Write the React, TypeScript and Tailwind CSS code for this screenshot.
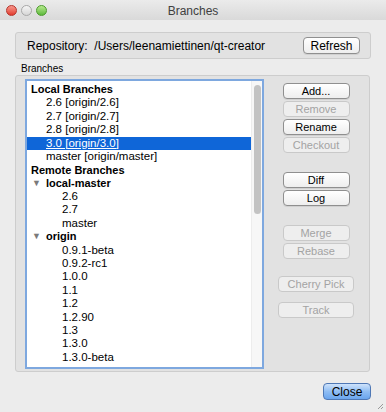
import React from "react";

type Row = { label: string; indent: number; bold?: boolean; arrow?: boolean; selected?: boolean };

const rows: Row[] = [
  { label: "Local Branches", indent: 0, bold: true },
  { label: "2.6 [origin/2.6]", indent: 1 },
  { label: "2.7 [origin/2.7]", indent: 1 },
  { label: "2.8 [origin/2.8]", indent: 1 },
  { label: "3.0 [origin/3.0]", indent: 1, selected: true },
  { label: "master [origin/master]", indent: 1 },
  { label: "Remote Branches", indent: 0, bold: true },
  { label: "local-master", indent: 1, bold: true, arrow: true },
  { label: "2.6", indent: 2 },
  { label: "2.7", indent: 2 },
  { label: "master", indent: 2 },
  { label: "origin", indent: 1, bold: true, arrow: true },
  { label: "0.9.1-beta", indent: 2 },
  { label: "0.9.2-rc1", indent: 2 },
  { label: "1.0.0", indent: 2 },
  { label: "1.1", indent: 2 },
  { label: "1.2", indent: 2 },
  { label: "1.2.90", indent: 2 },
  { label: "1.3", indent: 2 },
  { label: "1.3.0", indent: 2 },
  { label: "1.3.0-beta", indent: 2 },
];

const indentClass = ["pl-[4px]", "pl-[19px]", "pl-[35px]"];

function MacButton({ label, disabled, className }: { label: string; disabled?: boolean; className?: string }) {
  return (
    <div
      className={
        "flex items-center justify-center rounded-[4px] border text-[11px] leading-none " +
        (disabled
          ? "border-[#c9c9c9] bg-[#eeeeee] text-[#a3a3a3] "
          : "border-[#8f8f8f] bg-gradient-to-b from-[#ffffff] to-[#eeeeee] text-black shadow-[0_1px_0_rgba(0,0,0,0.08)] ") +
        (className ?? "")
      }
    >
      {label}
    </div>
  );
}

function TrafficLight({ color, ring }: { color: string; ring: string }) {
  return <div className={"h-[11px] w-[11px] rounded-full border " + color + " " + ring} />;
}

export default function App() {
  return (
    <div
      className="relative flex h-[412px] w-[386px] flex-col overflow-hidden bg-[#ececec] text-black"
      style={{ fontFamily: '"Liberation Sans", Arial, sans-serif' }}
    >
      {/* title bar */}
      <div className="relative flex h-[20px] items-center bg-gradient-to-b from-[#ebebeb] to-[#d9d9d9] px-[6px]">
        <div className="flex gap-[4px]">
          <TrafficLight color="bg-gradient-to-b from-[#f7958c] to-[#e1372c]" ring="border-[#b5352c]" />
          <TrafficLight color="bg-gradient-to-b from-[#f5f5f5] to-[#d6d6d6]" ring="border-[#a8a8a8]" />
          <TrafficLight color="bg-gradient-to-b from-[#b6ea8d] to-[#5cb93a]" ring="border-[#4c9a2e]" />
        </div>
        <div className="absolute inset-x-0 top-[2px] text-center text-[12px] text-[#404040]">Branches</div>
      </div>

      <div className="flex flex-1 flex-col px-[15px]">
        {/* repository box */}
        <div className="mt-[12px] flex h-[27px] items-center justify-between rounded-[3px] border border-[#cdcdcd] bg-[#e2e2e2] pl-[11px] pr-[10px]">
          <span className="text-[12px]">Repository:&nbsp; /Users/leenamiettinen/qt-creator</span>
          <MacButton label="Refresh" className="h-[17px] w-[57px] text-[12px]" />
        </div>

        <div className="ml-[6px] mt-[4px] text-[10px] leading-[11px]">Branches</div>

        {/* branches group */}
        <div className="mt-[1px] flex h-[297px] w-[355px] rounded-[3px] border border-[#cdcdcd] bg-[#e2e2e2]">
          <div className="ml-[9px] mt-[3px] flex h-[290px] w-[239px] border-2 border-[#7ea8df] bg-white">
            <div className="flex-1 pt-[2px]">
              {rows.map((r, i) => (
                <div
                  key={i}
                  className={
                    "flex h-[13.4px] items-center whitespace-nowrap leading-none " +
                    indentClass[r.indent] +
                    (r.selected ? " bg-[#0f66d8] text-white" : "") +
                    (r.bold ? " text-[11px] font-bold" : " text-[11.5px]")
                  }
                >
                  {r.arrow && <span className="-ml-[14px] mr-[5px] text-[9px] text-[#7a7a7a]">▼</span>}
                  <span className={r.selected ? "underline underline-offset-[1px]" : ""}>{r.label}</span>
                </div>
              ))}
            </div>
            <div className="flex w-[11px] justify-center border-l border-[#ededed] bg-[#f7f7f7] pt-[4px]">
              <div className="h-[129px] w-[7px] rounded-full bg-[#c3c3c3]" />
            </div>
          </div>

          <div className="ml-[14px] mt-[7px] flex w-[76px] flex-col items-center">
            <MacButton label="Add..." className="h-[16px] w-[67px]" />
            <MacButton label="Remove" disabled className="mt-[2px] h-[16px] w-[67px]" />
            <MacButton label="Rename" className="mt-[2px] h-[16px] w-[67px]" />
            <MacButton label="Checkout" disabled className="mt-[2px] h-[16px] w-[67px]" />
            <MacButton label="Diff" className="mt-[19px] h-[16px] w-[67px]" />
            <MacButton label="Log" className="mt-[2px] h-[16px] w-[67px]" />
            <MacButton label="Merge" disabled className="mt-[19px] h-[16px] w-[67px]" />
            <MacButton label="Rebase" disabled className="mt-[2px] h-[16px] w-[67px]" />
            <MacButton label="Cherry Pick" disabled className="mt-[17px] h-[16px] w-[76px]" />
            <MacButton label="Track" disabled className="mt-[10px] h-[16px] w-[76px]" />
          </div>
        </div>

        <div className="mt-[11px] flex justify-end">
          <div className="flex h-[17px] w-[48px] items-center justify-center rounded-[4px] border border-[#4f78b5] bg-gradient-to-b from-[#cfe3fb] via-[#8fbdf3] to-[#6aa5ee] text-[12px] text-black">
            Close
          </div>
        </div>
      </div>

      {/* resize grip */}
      <svg className="absolute bottom-[2px] right-[2px]" width="9" height="9" viewBox="0 0 9 9">
        <path d="M8 3 L3 8 M8 6 L6 8" stroke="#9a9a9a" strokeWidth="1" />
      </svg>
    </div>
  );
}
